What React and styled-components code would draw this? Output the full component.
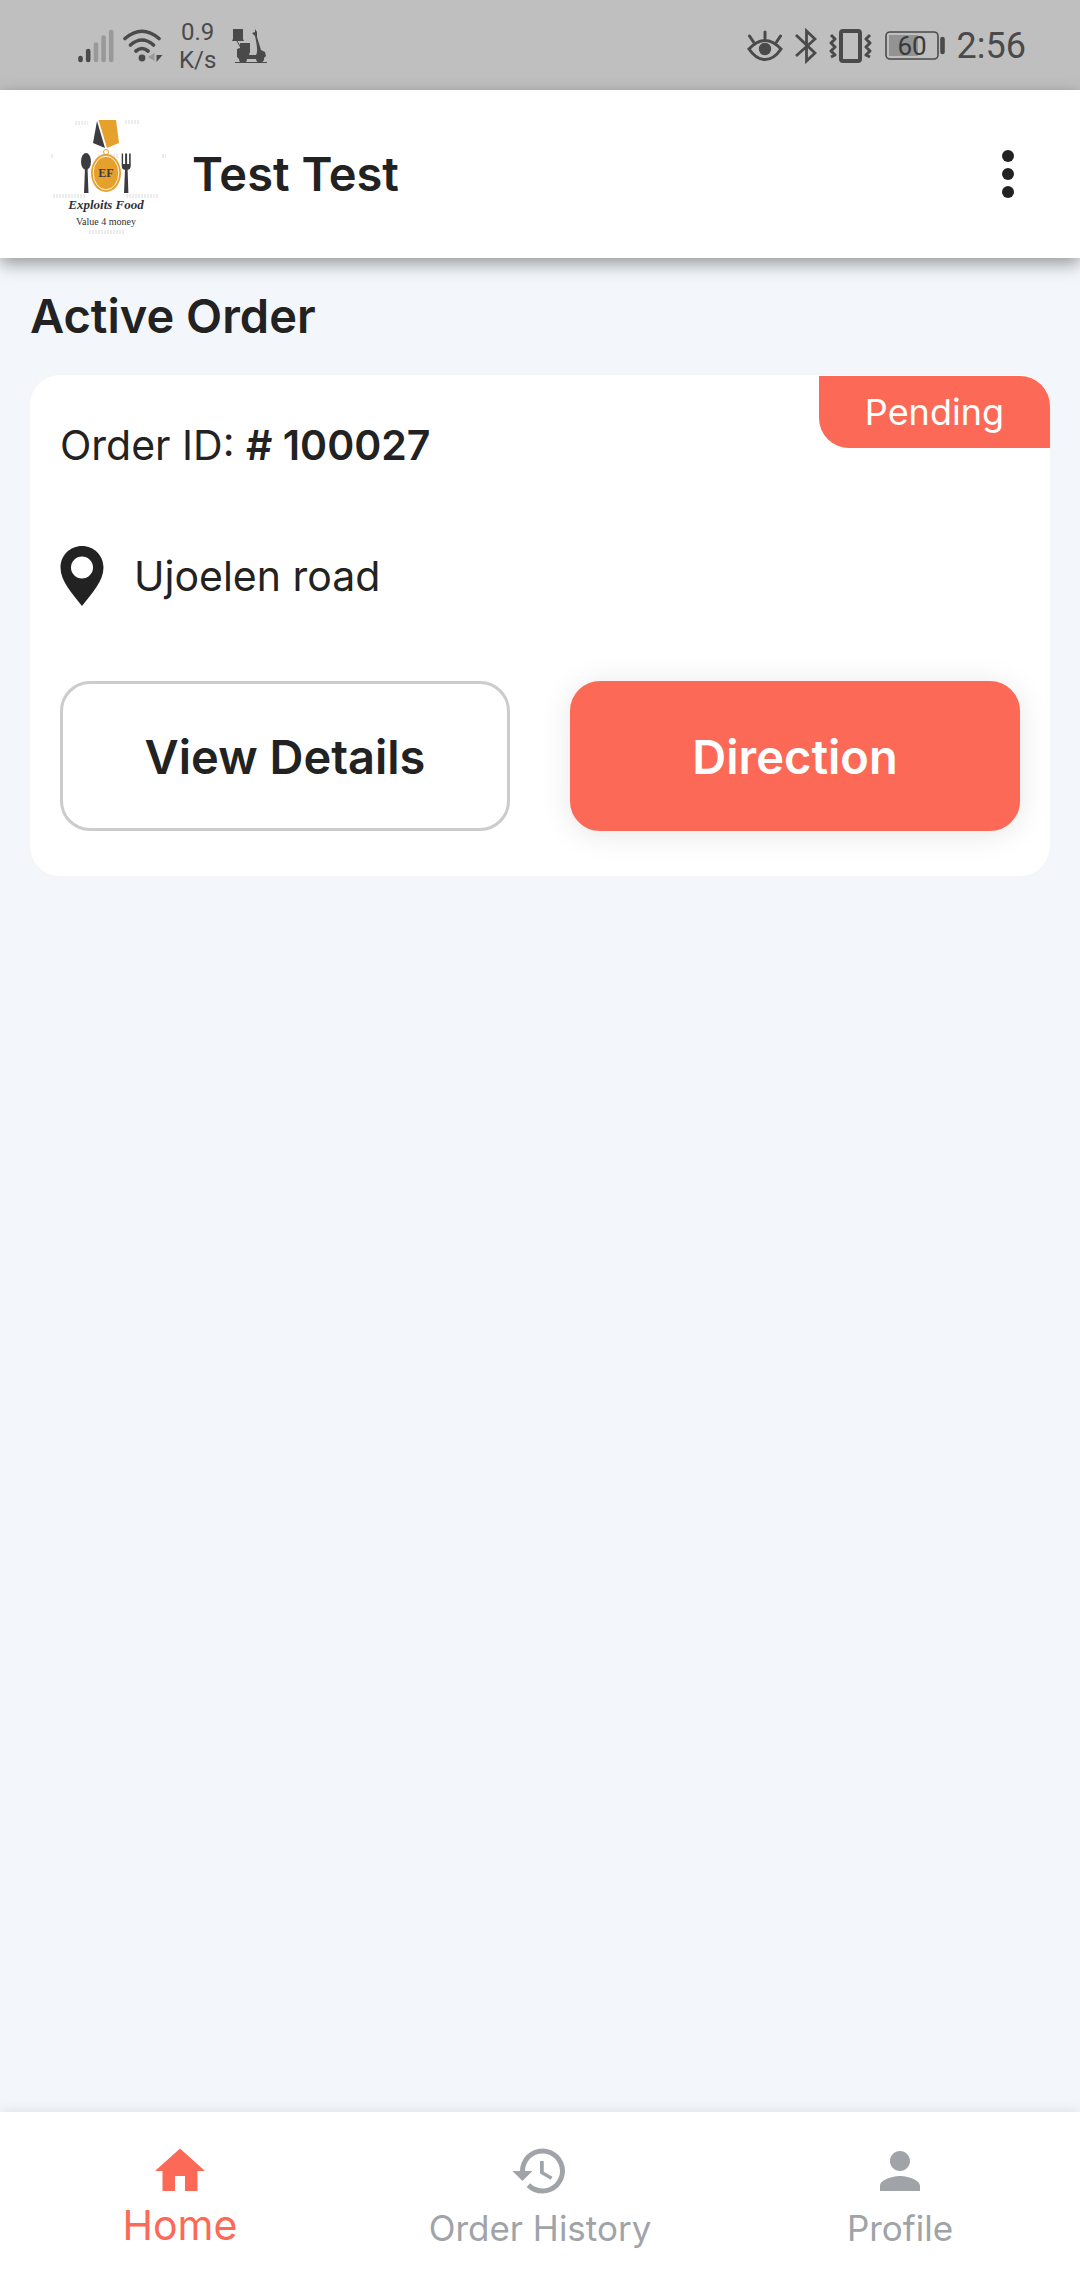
import React from "react";
import styled, { createGlobalStyle } from "styled-components";

const CORAL = "#fc6a57";
const INK = "#222222";
const STATUS = "#4a4a4a";

const GlobalStyle = createGlobalStyle`
  * { box-sizing: border-box; }
  body { margin: 0; background: #f3f6fb; }
  body, button { font-family: Inter, Roboto, sans-serif; color: ${INK}; }
  svg { display: block; flex: none; }
`;

const Page = styled.div`
  display: flex;
  flex-direction: column;
  min-height: 100vh;
`;

const StatusBar = styled.div`
  display: flex;
  justify-content: space-between;
  align-items: center;
  height: 90px;
  padding: 2px 54px 0 78px;
  background: #bfbfbf;
  color: ${STATUS};
  font-family: Roboto, sans-serif;
`;

const StatusGroup = styled.div`
  display: flex;
  align-items: center;
  gap: ${(p) => p.$gap}px;
`;

const Speed = styled.div`
  display: flex;
  flex-direction: column;
  align-items: center;
  margin: 0 7px;
  font-size: 24px;
  line-height: 28px;
`;

const Clock = styled.time`
  font-size: 36px;
  line-height: 44px;
`;

const Header = styled.header`
  display: flex;
  align-items: center;
  gap: 24px;
  height: 168px;
  padding: 0 42px 0 48px;
  background: #ffffff;
  box-shadow: 0 6px 16px rgba(0, 0, 0, 0.38);
`;

const Title = styled.h1`
  flex: 1;
  margin: 0;
  font-size: 47px;
  line-height: 58px;
  font-weight: 600;
`;

const MenuButton = styled.button`
  display: flex;
  justify-content: center;
  align-items: center;
  width: 60px;
  height: 72px;
  padding: 0;
  border: 0;
  background: none;
`;

const Main = styled.main`
  flex: 1;
  padding: 29px 30px;
`;

const SectionTitle = styled.h2`
  margin: 0 0 30px;
  font-size: 47px;
  line-height: 58px;
  font-weight: 600;
`;

const Card = styled.article`
  padding: 1px 0 45px;
  border-radius: 30px;
  background: #ffffff;
  box-shadow: 0 0 4px 2px #f5f5f7;
`;

const CardHead = styled.div`
  display: flex;
  justify-content: space-between;
  align-items: flex-start;
  padding-left: 30px;
`;

const OrderId = styled.p`
  margin: 39px 0 0;
  font-size: 41px;
  line-height: 60px;
  b { font-weight: 600; }
`;

const Badge = styled.span`
  padding: 0 46px;
  border-radius: 0 30px;
  background: ${CORAL};
  color: #ffffff;
  font-size: 36px;
  line-height: 72px;
`;

const Location = styled.div`
  display: flex;
  align-items: center;
  gap: 30px;
  margin: 71px 30px 75px;
  font-size: 41px;
  line-height: 60px;
`;

const Actions = styled.div`
  display: grid;
  grid-template-columns: 1fr 1fr;
  gap: 60px;
  padding: 0 30px;
`;

const ActionButton = styled.button`
  height: 150px;
  border: 3px solid ${(p) => (p.$primary ? CORAL : "#cccccc")};
  border-radius: 30px;
  background: ${(p) => (p.$primary ? CORAL : "#ffffff")};
  box-shadow: ${(p) => (p.$primary ? "0 3px 30px rgba(0, 0, 0, 0.1)" : "none")};
  color: ${(p) => (p.$primary ? "#ffffff" : INK)};
  font-size: 47px;
  font-weight: 600;
`;

const BottomNav = styled.nav`
  display: grid;
  grid-template-columns: repeat(3, 1fr);
  height: 168px;
  padding-top: 29px;
  background: #ffffff;
  box-shadow: 0 0 12px rgba(0, 0, 0, 0.1);
`;

const NavLink = styled.a`
  display: flex;
  flex-direction: column;
  align-items: center;
  color: ${(p) => (p.$active ? CORAL : "#a0a4a8")};
  font-size: ${(p) => (p.$active ? 41 : 35)}px;
  line-height: ${(p) => (p.$active ? 48 : 54)}px;
  text-decoration: none;
`;

const Signal = () => (
  <svg width="36" height="34" viewBox="0 0 36 34" strokeWidth="4.6" strokeLinecap="round" aria-hidden="true">
    <path d="M2.5 29v2M10.2 22v9" stroke={STATUS} />
    <path d="M18 15.500v15.500M25.600 8.500v22.500M33.200 3v28" stroke="#999" />
  </svg>
);

const Wifi = () => (
  <svg width="40" height="34" viewBox="0 0 40 34" fill="none" aria-hidden="true">
    <path d="M2 9.500Q19 -5 36 9.500M7.500 16Q19 6 30.500 16M13 22Q19 17 25 22" stroke={STATUS} strokeWidth="3.600" strokeLinecap="round" />
    <circle cx="19" cy="29" r="3.400" fill={STATUS} />
    <path d="M31.500 24v8L25 28z" fill="#999" />
    <path d="M33.500 26h6l-6 7z" fill={STATUS} />
  </svg>
);

const Scooter = () => (
  <svg width="36" height="36" viewBox="0 0 36 36" fill={STATUS} aria-hidden="true">
    <path d="M1 1h10v10l1 2H0l1-2z" />
    <path d="M5 13l4 7" stroke={STATUS} strokeWidth="1" />
    <path d="M8 15h10v9l-1 3h7c2-3 1-10-1-19l-3-3 3-1V1l2 3v5l4 13 4 2 1 4-2 2a4 4 0 0 1-8 1H15a4 4 0 0 1-8 0l-2-2V21l3-1z" />
    <path d="M3 34.500h32" stroke={STATUS} strokeWidth="1" />
  </svg>
);

const Eye = () => (
  <svg width="36" height="32" viewBox="0 0 36 32" fill="none" stroke={STATUS} strokeWidth="3" strokeLinecap="round" aria-hidden="true">
    <path d="M2 19Q10 10.500 18 10.500T34 19Q27 29.500 18 29.500T2 19z" />
    <circle cx="18" cy="19" r="6.200" fill={STATUS} stroke="none" />
    <path d="M18 2v6M2.500 6l4 6M33.500 6l-4 6" />
  </svg>
);

const Bluetooth = () => (
  <svg width="22" height="36" viewBox="0 0 22 36" fill="none" stroke={STATUS} strokeWidth="2.800" aria-hidden="true">
    <path d="M1 7l19 18-8.500 8V3l8.500 8L1 28" />
  </svg>
);

const Vibrate = () => (
  <svg width="44" height="34" viewBox="0 0 44 34" fill="none" stroke={STATUS} aria-hidden="true">
    <rect x="12" y="2" width="19" height="30" rx="2" strokeWidth="4" />
    <path d="M2 6l4 4-4 4 4 4-4 4 4 4-4 2M41 6l-4 4 4 4-4 4 4 4-4 4 4 2" strokeWidth="3" strokeLinejoin="round" />
  </svg>
);

const Battery = () => (
  <svg width="60" height="30" viewBox="0 0 60 30" role="img" aria-label="Battery 60 percent">
    <rect x="1" y="1" width="52" height="27" rx="4" fill="none" stroke={STATUS} strokeWidth="1.600" />
    <rect x="4" y="4" width="29" height="21" fill="#939393" />
    <path d="M57.500 8v13" stroke={STATUS} strokeWidth="4.600" strokeLinecap="round" />
    <text x="27" y="24" textAnchor="middle" fontFamily="Roboto, sans-serif" fontSize="26" fill="#3a3a3a">60</text>
  </svg>
);

const Logo = () => (
  <svg width="120" height="120" viewBox="0 0 120 120" role="img" aria-label="Exploits Food">
    <g stroke="#ececec" strokeWidth="4" strokeDasharray="2 1">
      <path d="M27 9h13M77 8h14M3 42h2M114 42h4M5 82h32M78 82h33M41 118h36M50 42h20" />
    </g>
    <path d="M49 7l-4 22 12 5z" fill="#3b3b42" />
    <path d="M50.500 6H68l3 23-12 5z" fill="#e6a12c" />
    <circle cx="58" cy="38" r="2.500" fill="none" stroke="#e6a12c" />
    <ellipse cx="58" cy="59" rx="15" ry="19" fill="#e6a12c" />
    <ellipse cx="58" cy="59" rx="12.800" ry="16.800" fill="none" stroke="#fff" strokeWidth="0.900" />
    <text x="58" y="63" textAnchor="middle" fontFamily="Liberation Serif, serif" fontWeight="700" fontSize="12" fill="#3b3b42">EF</text>
    <ellipse cx="38" cy="47.500" rx="5" ry="8.500" fill="#3b3b42" />
    <path d="M37 54h2.500l1 25h-4.500zM77 56h2.600l.8 23h-4.400z" fill="#3b3b42" />
    <path d="M73.700 39.500h1.400V50h2V39.500h2V50h2V39.500h1.600V52q0 3.500-3.500 4h-2q-3.500-.5-3.500-4z" fill="#3b3b42" />
    <text x="58" y="95" textAnchor="middle" fontFamily="Liberation Serif, serif" fontStyle="italic" fontWeight="700" fontSize="13" fill="#303035">Exploits Food</text>
    <text x="58" y="111" textAnchor="middle" fontFamily="Liberation Serif, serif" fontSize="10" fill="#303035">Value 4 money</text>
  </svg>
);

const Dots = () => (
  <svg width="12" height="48" viewBox="0 0 12 48" fill={INK} aria-hidden="true">
    <circle cx="6" cy="6" r="6" />
    <circle cx="6" cy="24" r="6" />
    <circle cx="6" cy="42" r="6" />
  </svg>
);

const Pin = () => (
  <svg width="44" height="60" viewBox="0 0 44 60" aria-hidden="true">
    <path fillRule="evenodd" fill={INK} d="M22 0C10 0 .5 9.500.5 21.500.5 35 12 47 22 60 32 47 43.500 35 43.500 21.500 43.500 9.500 34 0 22 0zM22 10.500a11 11 0 1 1 0 22 11 11 0 0 1 0-22z" />
  </svg>
);

const NAV = [
  { label: "Home", path: "M10 20v-6h4v6h5v-8h3L12 3 2 12h3v8z" },
  {
    label: "Order History",
    path: "M13 3a9 9 0 0 0-9 9H1l3.890 3.890.07.14L9 12H6c0-3.870 3.130-7 7-7s7 3.130 7 7-3.130 7-7 7c-1.930 0-3.680-.79-4.940-2.060l-1.420 1.420A8.954 8.954 0 0 0 13 21a9 9 0 0 0 0-18zm-1 5v5l4.280 2.540.72-1.210-3.500-2.080V8H12z",
  },
  { label: "Profile", path: "M12 12c2.210 0 4-1.790 4-4s-1.790-4-4-4-4 1.790-4 4 1.790 4 4 4zm0 2c-2.670 0-8 1.340-8 4v2h16v-2c0-2.660-5.330-4-8-4z" },
];

export default function App() {
  return (
    <Page>
      <GlobalStyle />
      <StatusBar>
        <StatusGroup $gap={9}>
          <Signal />
          <Wifi />
          <Speed>
            <span>0.9</span>
            <span>K/s</span>
          </Speed>
          <Scooter />
        </StatusGroup>
        <StatusGroup $gap={12}>
          <Eye />
          <Bluetooth />
          <Vibrate />
          <Battery />
          <Clock>2:56</Clock>
        </StatusGroup>
      </StatusBar>
      <Header>
        <Logo />
        <Title>Test Test</Title>
        <MenuButton type="button" aria-label="Menu">
          <Dots />
        </MenuButton>
      </Header>
      <Main>
        <SectionTitle>Active Order</SectionTitle>
        <Card>
          <CardHead>
            <OrderId>
              Order ID: <b># 100027</b>
            </OrderId>
            <Badge>Pending</Badge>
          </CardHead>
          <Location>
            <Pin />
            <span>Ujoelen road</span>
          </Location>
          <Actions>
            <ActionButton type="button">View Details</ActionButton>
            <ActionButton type="button" $primary>Direction</ActionButton>
          </Actions>
        </Card>
      </Main>
      <BottomNav>
        {NAV.map((item, i) => (
          <NavLink key={item.label} href="#" $active={i === 0} aria-current={i === 0 ? "page" : undefined}>
            <svg width="60" height="60" viewBox="0 0 24 24" fill="currentColor" aria-hidden="true">
              <path d={item.path} />
            </svg>
            {item.label}
          </NavLink>
        ))}
      </BottomNav>
    </Page>
  );
}
